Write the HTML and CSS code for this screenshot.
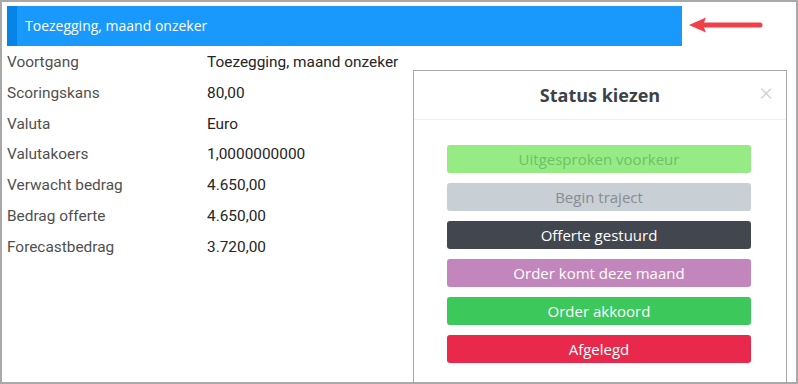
FILE: index.html
```html
<!DOCTYPE html>
<html>
<head>
<meta charset="utf-8">
<link rel="stylesheet" href="styles.css">
</head>
<body>
<div class="frame">
  <div class="status-bar">Toezegging, maand onzeker</div>
  <svg class="arrow" width="76" height="18" viewBox="0 0 76 18">
    <path d="M16 9 H72" stroke="#f2404a" stroke-width="5" stroke-linecap="round"/>
    <path d="M1 9 L18 1.5 L15 9 L18 16.5 Z" fill="#f2404a"/>
  </svg>
  <div class="fields">
    <div class="label">Voortgang</div><div class="value">Toezegging, maand onzeker</div>
    <div class="label">Scoringskans</div><div class="value">80,00</div>
    <div class="label">Valuta</div><div class="value">Euro</div>
    <div class="label">Valutakoers</div><div class="value">1,0000000000</div>
    <div class="label">Verwacht bedrag</div><div class="value">4.650,00</div>
    <div class="label">Bedrag offerte</div><div class="value">4.650,00</div>
    <div class="label">Forecastbedrag</div><div class="value">3.720,00</div>
  </div>
  <div class="modal">
    <div class="modal-header">
      <span class="modal-title">Status kiezen</span>
      <span class="close">&times;</span>
    </div>
    <div class="modal-body">
      <div class="btn btn-lightgreen">Uitgesproken voorkeur</div>
      <div class="btn btn-gray">Begin traject</div>
      <div class="btn btn-dark">Offerte gestuurd</div>
      <div class="btn btn-purple">Order komt deze maand</div>
      <div class="btn btn-green">Order akkoord</div>
      <div class="btn btn-red">Afgelegd</div>
    </div>
  </div>
</div>
</body>
</html>
```
FILE: styles.css
```css
html, body {
  margin: 0;
  padding: 0;
  background: #ffffff;
}
.frame {
  position: relative;
  box-sizing: border-box;
  width: 798px;
  height: 384px;
  border: 2px solid #a9a9a9;
  padding: 4px 5px 0 5px;
  overflow: hidden;
  font-family: "Open Sans", "Noto Sans", sans-serif;
}
.status-bar {
  box-sizing: border-box;
  width: 675px;
  height: 40px;
  background: #1899fb;
  border-left: 10px solid #0785e6;
  color: #ffffff;
  font-size: 14px;
  line-height: 40px;
  padding-left: 8px;
}
.arrow {
  position: absolute;
  left: 686px;
  top: 14px;
}
.fields {
  display: grid;
  grid-template-columns: 200px auto;
  padding-top: 1px;
  font-family: Roboto, "Open Sans", sans-serif;
  font-size: 15.4px;
  line-height: 30.8px;
}
.label {
  color: #505050;
}
.value {
  color: #262626;
}
.modal {
  position: absolute;
  left: 411px;
  top: 68px;
  width: 374px;
  height: 330px;
  box-sizing: border-box;
  border: 1px solid #a9a9a9;
  background: #ffffff;
}
.modal-header {
  position: relative;
  height: 48px;
  border-bottom: 1px solid #eef0f2;
  display: flex;
  align-items: center;
  justify-content: center;
}
.modal-title {
  font-weight: 700;
  font-size: 18px;
  color: #3d4148;
}
.close {
  position: absolute;
  right: 13px;
  top: 10px;
  font-size: 24px;
  line-height: 24px;
  color: #c3c7cb;
  font-weight: 300;
}
.modal-body {
  display: flex;
  flex-direction: column;
  align-items: center;
  gap: 10px;
  padding-top: 25px;
}
.btn {
  width: 304px;
  height: 28px;
  border-radius: 3px;
  text-align: center;
  line-height: 28px;
  font-size: 15px;
  color: #ffffff;
  margin-left: -2px;
}
.btn-lightgreen { background: #96eb85; color: #6fc166; }
.btn-gray { background: #c8d0d6; color: #868c92; }
.btn-dark { background: #42464e; }
.btn-purple { background: #c386bc; }
.btn-green { background: #3cc85b; }
.btn-red { background: #e8294b; }
```
